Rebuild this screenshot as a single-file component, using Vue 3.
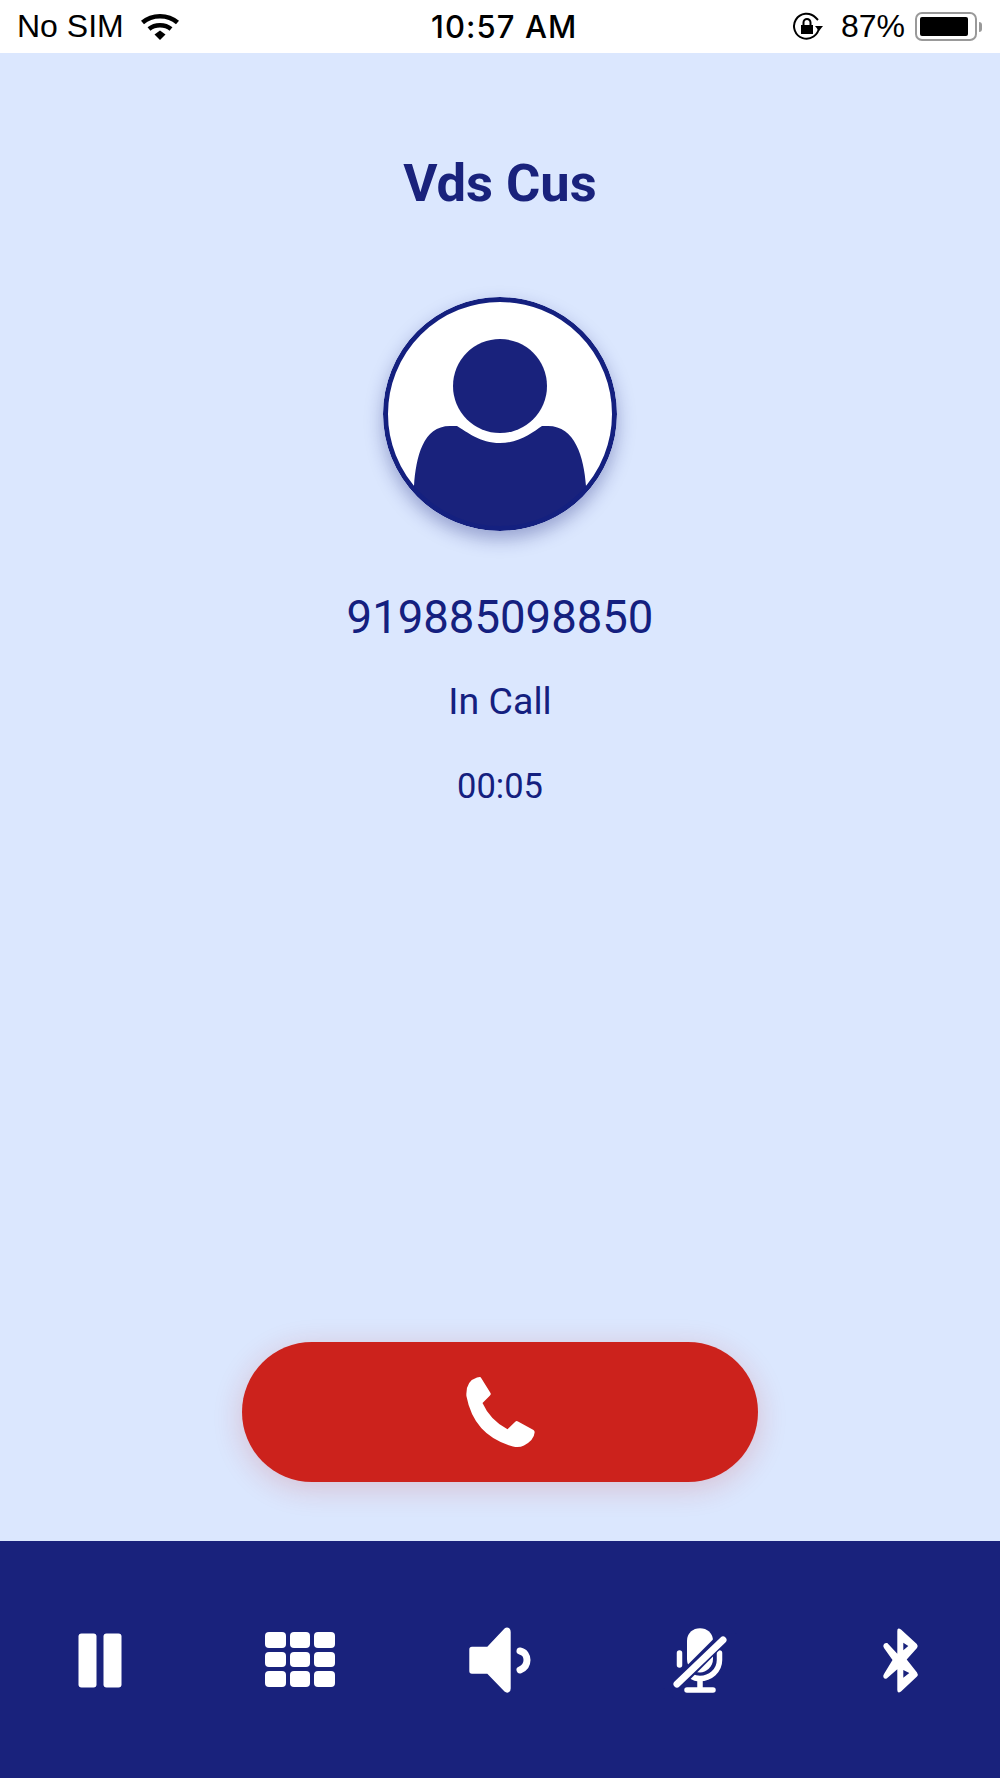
<script setup>
const keys = [0, 1, 2, 3, 4, 5, 6, 7, 8];
</script>
<template>
  <div class="screen">
    <div class="status">
      <div class="status-left">
        <span>No SIM</span>
        <svg class="wifi" width="38" height="28" viewBox="0 0 38 28">
          <path d="M1.5 9.5C11 1 27 1 36.500 9.500" class="wave" />
          <path d="M8 16C14 11 24 11 30 16" class="wave" />
          <path d="M13.500 21.500L19 17.500L24.500 21.500L19 27Z" fill="#000" />
        </svg>
      </div>
      <div class="time">10:57 AM</div>
      <div class="status-right">
        <svg width="32" height="30" viewBox="0 0 32 30">
          <path d="M27 15A12.500 12.500 0 1 1 23.500 5.500L26 8" fill="none" stroke="#000" stroke-width="2" />
          <path d="M23 14H31L27 19Z" fill="#000" />
          <rect x="9" y="13" width="12" height="9" fill="#000" />
          <path d="M11.500 13V10.500A3.500 3.500 0 0 1 18.500 10.500V13" fill="none" stroke="#000" stroke-width="2" />
        </svg>
        <span class="pct">87%</span>
        <div class="battery"><div class="level"></div></div>
        <div class="tip"></div>
      </div>
    </div>

    <div class="main">
      <div class="name">Vds Cus</div>
      <svg class="avatar" width="234" height="234" viewBox="0 0 234 234">
        <circle cx="117" cy="117" r="115" fill="#fff" />
        <path d="M31 189C33 160 40 129 67 129H74C84 135 97 146 117 146C137 146 150 135 159 129H165C192 129 201 160 203 189L206 190A115 115 0 0 1 28 190Z" fill="#19227c" />
        <circle cx="117" cy="89" r="47" fill="#19227c" />
        <circle cx="117" cy="117" r="114.500" fill="none" stroke="#14207f" stroke-width="5" />
      </svg>
      <div class="number">919885098850</div>
      <div class="state">In Call</div>
      <div class="timer">00:05</div>
      <button class="end">
        <svg width="80" height="80" viewBox="0 0 80 80">
          <path d="M20.700 5.300L30.500 21Q31.200 22.500 30 23.500L22.500 31Q30 48 47.500 57.300L55 50Q56.500 48.500 58 49.500L73.500 58Q75 59 74.500 61Q74 68 64 73.500Q59 76 53 74.500Q14 64 6.400 24Q5.500 9 17 5.500Q20 4.700 20.700 5.300Z" fill="#fff" />
        </svg>
      </button>
    </div>

    <div class="footer">
      <div class="item">
        <svg width="80" height="80" viewBox="0 0 80 80">
          <rect x="18.500" y="13.500" width="18" height="54" rx="3" fill="#fff" />
          <rect x="43.500" y="13.500" width="18" height="54" rx="3" fill="#fff" />
        </svg>
      </div>
      <div class="item">
        <div class="keypad">
          <span v-for="k in keys" :key="k" class="key"></span>
        </div>
      </div>
      <div class="item">
        <svg width="80" height="80" viewBox="0 0 80 80">
          <path d="M12 26.700H27.300L44.500 8.500Q47 6.500 49.500 8.500Q50.700 9.500 50.700 12V68.500Q50.700 71 49 72Q47 73.500 44.500 71.500L27.300 53.700H12Q9.300 53.700 9.300 51V29.500Q9.300 26.700 12 26.700Z" fill="#fff" />
          <path d="M60 31C65 32 67 36 67 40C67 44 65 48 60 50" fill="none" stroke="#fff" stroke-width="7" stroke-linecap="round" />
        </svg>
      </div>
      <div class="item">
        <svg width="80" height="80" viewBox="0 0 80 80">
          <path d="M27 39V21C27 13 33 8.300 40 8.300C47 8.300 53 13 53 21V39C53 47 46 52.500 40 52.500C33 52.500 27 47 27 39Z" fill="#fff" />
          <path d="M59.500 33V40C59.500 51 50 58.500 40 58.500C37 58.500 34 58 32 56.500" fill="none" stroke="#fff" stroke-width="5.500" stroke-linecap="round" />
          <path d="M19.500 33V45" fill="none" stroke="#fff" stroke-width="5.500" stroke-linecap="round" />
          <path d="M40 59V70M27 70H53" fill="none" stroke="#fff" stroke-width="5.500" stroke-linecap="round" />
          <path d="M8 73L72 9" fill="none" stroke="#19227c" stroke-width="12" />
          <path d="M17 64L63 20" fill="none" stroke="#fff" stroke-width="7" stroke-linecap="round" />
        </svg>
      </div>
      <div class="item">
        <svg width="80" height="80" viewBox="0 0 80 80">
          <path fill-rule="evenodd" d="M37.300 11Q37.300 7 41 9.500L56.800 24Q58.500 26 57 28L46.700 39.500L57 52.500Q58.500 54.500 57 56.500L41 71.500Q37.300 74 37.300 70V49.300L27 58.300Q25 59.500 23.800 58Q22.500 56 24 54L32.500 40L24 28Q22.500 26 24 24Q25.500 22.500 27.300 23L37.300 33.700ZM43.300 22.700V30.300L48.300 26ZM43.300 50V57.700L49.300 53Z" fill="#fff" />
        </svg>
      </div>
    </div>
  </div>
</template>
<style scoped>
.screen {
  display: flex;
  flex-direction: column;
  height: 1778px;
  background: #dbe7fe;
  font-family: Roboto, sans-serif;
  color: #19227c;
}
.status {
  height: 53px;
  background: #fff;
  display: flex;
  align-items: center;
  color: #000;
  font-family: "Liberation Sans", sans-serif;
  font-size: 32px;
}
.status-left {
  flex: 1;
  display: flex;
  align-items: center;
  padding-left: 17px;
  gap: 17px;
}
.wifi {
  display: block;
}
.wave {
  fill: none;
  stroke: #000;
  stroke-width: 4.5;
}
.time {
  font-family: Inter, sans-serif;
  font-weight: 500;
  font-size: 31px;
  letter-spacing: 1.1px;
  margin-left: 9.500px;
}
.status-right {
  flex: 1;
  display: flex;
  align-items: center;
  justify-content: flex-end;
  padding-right: 18px;
}
.pct {
  margin-left: 17px;
  margin-right: 10px;
}
.battery {
  width: 62px;
  height: 29px;
  box-sizing: border-box;
  border: 2px solid #999;
  border-radius: 7px;
  padding: 3px;
}
.level {
  width: 48px;
  height: 100%;
  background: #000;
  border-radius: 2px;
}
.tip {
  width: 3px;
  height: 10px;
  margin-left: 2px;
  background: #999;
  border-radius: 0 3px 3px 0;
}
.main {
  flex: 1;
  display: flex;
  flex-direction: column;
  align-items: center;
  padding-top: 100px;
}
.name {
  font-size: 52.5px;
  font-weight: 700;
  line-height: 60px;
}
.avatar {
  display: block;
  margin-top: 84px;
  border-radius: 50%;
  box-shadow: 0 8px 18px rgba(25, 34, 124, 0.35);
}
.number {
  margin-top: 60px;
  font-size: 45.5px;
  line-height: 54px;
  color: #14207f;
}
.state {
  margin-top: 34px;
  font-size: 37.5px;
  line-height: 44px;
  color: #14207f;
}
.timer {
  margin-top: 43px;
  font-size: 34.5px;
  line-height: 40px;
  color: #14207f;
}
.end {
  margin-top: auto;
  margin-bottom: 59px;
  width: 516px;
  height: 140px;
  border: none;
  border-radius: 70px;
  background: #cc221c;
  padding: 0;
  display: flex;
  align-items: center;
  justify-content: center;
  box-shadow: 0 6px 30px rgba(204, 34, 28, 0.2);
}
.footer {
  height: 237px;
  background: #19227c;
  display: grid;
  grid-template-columns: repeat(5, 1fr);
  align-items: center;
  justify-items: center;
}
.item {
  width: 80px;
  height: 80px;
  display: flex;
  align-items: center;
  justify-content: center;
}
.keypad {
  display: grid;
  grid-template-columns: repeat(3, 20.500px);
  grid-auto-rows: 15.500px;
  gap: 4px;
}
.key {
  background: #fff;
  border-radius: 4px;
}
</style>
